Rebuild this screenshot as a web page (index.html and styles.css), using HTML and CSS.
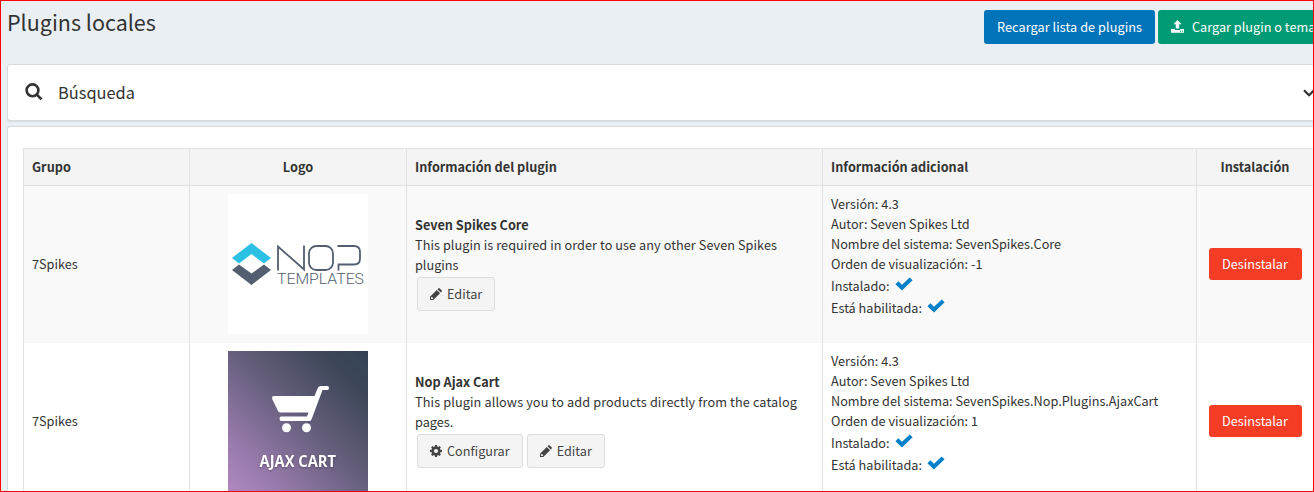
FILE: index.html
```html
<!DOCTYPE html>
<html lang="es">
<head>
<meta charset="utf-8">
<title>Plugins locales</title>
<link rel="stylesheet" href="styles.css">
</head>
<body>
<svg width="0" height="0" class="sprite">
  <symbol id="check" viewBox="0 0 18 14"><path d="M0.4 7.2 3.4 4.2 7 7.7 14.7 0.4 17.6 3.3 7 13.4Z"/></symbol>
  <symbol id="pencil" viewBox="0 0 12 12"><path fill-rule="evenodd" d="M0 12V8.7L6.8 1.9 10.1 5.2 3.3 12ZM1.1 9.5V10.9H2.6L3.3 10.2 1.8 8.7ZM7.5 1.2 8.3.4Q9 -.2 9.7.4L11.6 2.3Q12.2 3 11.6 3.7L10.8 4.5Z"/></symbol>
  <symbol id="gear" viewBox="0 0 12 12"><path fill-rule="evenodd" d="M5 0H7L7.3 1.6 8.2 2 9.6 1.1 10.9 2.4 10 3.8 10.4 4.7 12 5V7L10.4 7.3 10 8.2 10.9 9.6 9.6 10.9 8.2 10 7.3 10.4 7 12H5L4.7 10.4 3.8 10 2.4 10.9 1.1 9.6 2 8.2 1.6 7.3 0 7V5L1.6 4.7 2 3.8 1.1 2.4 2.4 1.1 3.8 2 4.7 1.6ZM6 3.9A2.1 2.1 0 1 0 6 8.1 2.1 2.1 0 1 0 6 3.9Z"/></symbol>
</svg>
<div class="page">
  <header class="top">
    <h1 class="title">Plugins locales</h1>
    <div class="actions">
      <a class="btn btn-blue"><span class="t-reload">Recargar lista de plugins</span></a>
      <a class="btn btn-green"><svg class="upload" width="13" height="13" viewBox="0 0 13 13"><path d="M6.5 0 10.6 4.3H8.2V8.5H4.8V4.3H2.4ZM0 9H4V10H9V9H13V12.7H0Z"/><path d="M9 10.8H10V11.8H9ZM11 10.8H12V11.8H11Z" fill="#009b74"/></svg><span class="t-upload">Cargar plugin o tema</span></a>
    </div>
  </header>
  <section class="panel search">
    <svg class="lens" width="18" height="18" viewBox="0 0 18 18"><circle cx="7.5" cy="7.3" r="5.9"/><path d="M11.7 11.5 16.5 16.3"/></svg>
    <span class="search-label">Búsqueda</span>
    <svg class="chev" width="12" height="8" viewBox="0 0 12 8"><path d="M1 1.3 6 6.2 11 1.3"/></svg>
  </section>
  <section class="panel list">
    <div class="grid">
      <div class="cell head">Grupo</div>
      <div class="cell head mid">Logo</div>
      <div class="cell head">Información del plugin</div>
      <div class="cell head">Información adicional</div>
      <div class="cell head mid">Instalación</div>

      <div class="cell odd">7Spikes</div>
      <div class="cell odd mid">
        <svg width="140" height="140" viewBox="0 0 140 140">
          <rect width="140" height="140" fill="#fff"/>
          <path fill="#2bc0e4" d="M4 64 23.5 49 43 64 36 69.5 23.5 60 11 69.5Z"/>
          <path fill="#535f70" d="M4 76 11 70.5 23.5 79.5 36 70.5 43 76 23.5 91Z"/>
          <g class="nop"><path d="M50 76.5V52.5L76 75.5V51.5"/><rect x="81" y="52" width="24" height="24" rx="7.5"/><path d="M109.5 52H126Q132 52 132 58V64.5Q132 70.5 126 70.5H110.5V76.5"/></g>
          <text class="logo-sub" x="49" y="90" textLength="87" lengthAdjust="spacingAndGlyphs">TEMPLATES</text>
        </svg>
      </div>
      <div class="cell odd info">
        <strong>Seven Spikes Core</strong>
        <span class="desc-core">This plugin is required in order to use any other Seven Spikes</span>
        <span>plugins</span>
        <div class="tools"><a class="btn btn-grey"><svg class="ico" width="12" height="12"><use href="#pencil"/></svg>Editar</a></div>
      </div>
      <div class="cell odd extra">
        <span>Versión: 4.3</span>
        <span>Autor: Seven Spikes Ltd</span>
        <span>Nombre del sistema: SevenSpikes.Core</span>
        <span>Orden de visualización: -1</span>
        <span class="flag">Instalado: <svg class="tick" width="18" height="14"><use href="#check"/></svg></span>
        <span class="flag">Está habilitada: <svg class="tick" width="18" height="14"><use href="#check"/></svg></span>
      </div>
      <div class="cell odd mid"><a class="btn btn-red">Desinstalar</a></div>

      <div class="cell even">7Spikes</div>
      <div class="cell even mid">
        <svg width="140" height="140" viewBox="0 0 140 140">
          <defs><linearGradient id="dusk" x1="0" y1="1" x2="1" y2="0"><stop offset="0" stop-color="#b088c0"/><stop offset=".2" stop-color="#977aab"/><stop offset=".5" stop-color="#68607f"/><stop offset=".82" stop-color="#3e475a"/><stop offset="1" stop-color="#334154"/></linearGradient></defs>
          <rect width="140" height="140" fill="url(#dusk)"/>
          <path fill="#fff" d="M46 45H86.500L90 36.500Q91 35 93 35H99.500Q101 35 101 37T99.500 39H94.500L83.500 68.500Q83 70 81 70H53.500Q51.500 70 51.500 67.700T53.500 65.500H79L80.500 61.500H52.500Q51 61.500 50 60L44.200 48Q43.500 45 46 45Z"/>
          <circle cx="58.500" cy="76.700" r="4.500" fill="#fff"/><circle cx="78.500" cy="76.700" r="4.500" fill="#fff"/>
          <text class="cart-name" x="31.500" y="116" textLength="76.500" lengthAdjust="spacingAndGlyphs">AJAX CART</text>
        </svg>
      </div>
      <div class="cell even info">
        <strong>Nop Ajax Cart</strong>
        <span class="desc-cart">This plugin allows you to add products directly from the catalog</span>
        <span>pages.</span>
        <div class="tools"><a class="btn btn-grey"><svg class="ico" width="12" height="12"><use href="#gear"/></svg>Configurar</a><a class="btn btn-grey"><svg class="ico" width="12" height="12"><use href="#pencil"/></svg>Editar</a></div>
      </div>
      <div class="cell even extra">
        <span>Versión: 4.3</span>
        <span>Autor: Seven Spikes Ltd</span>
        <span>Nombre del sistema: SevenSpikes.Nop.Plugins.AjaxCart</span>
        <span>Orden de visualización: 1</span>
        <span class="flag">Instalado: <svg class="tick" width="18" height="14"><use href="#check"/></svg></span>
        <span class="flag">Está habilitada: <svg class="tick" width="18" height="14"><use href="#check"/></svg></span>
      </div>
      <div class="cell even mid"><a class="btn btn-red">Desinstalar</a></div>
    </div>
  </section>
</div>
</body>
</html>
```
FILE: styles.css
```css
* { box-sizing: border-box; }
body { margin: 0; font: 12.7px/20px "Noto Sans CJK SC", "Noto Sans", sans-serif; color: #333; }
.sprite { display: none; }
.page { height: 492px; overflow: hidden; border: 1px solid #f00; border-bottom-color: #e01010; background: #eaeff4; padding: 0 0 0 6px; }
.top { display: flex; justify-content: space-between; height: 63px; padding-top: 9px; }
.title { margin: 0; font-size: 21.5px; font-weight: 400; line-height: 23px; white-space: nowrap; }
.actions { display: flex; gap: 3px; width: 329px; flex: none; overflow: hidden; }
.btn { display: flex; align-items: center; justify-content: center; flex: none; border-radius: 3px; white-space: nowrap; height: 34px; }
.btn-blue { width: 171px; background: #0073b9; color: #fff; }
.t-reload { letter-spacing: .06px; }
.btn-green { width: 184px; background: #009b74; color: #fff; justify-content: flex-start; padding-left: 13px; }
.upload { fill: #fff; margin: -1px 8px 0 0; }
.btn-grey { background: #f4f4f4; border: 1px solid #ddd; color: #444; padding: 0 12px; }
.btn-red { background: #f53d26; color: #fff; width: 93px; height: 32px; }
.ico { fill: #444; margin-right: 5px; }
.panel { background: #fff; border: 1px solid #d9dcdf; border-right: 0; border-radius: 3px 0 0 3px; box-shadow: 0 1px 1px rgba(0,0,0,.08); }
.search { display: flex; align-items: center; height: 57px; padding-left: 17px; overflow: hidden; }
.lens { fill: none; stroke: #333; stroke-width: 2.6; flex: none; margin-top: -1px; }
.search-label { font-size: 16.4px; margin: -1px 0 0 15px; flex: 1; }
.chev { fill: none; stroke: #333; stroke-width: 2.2; flex: none; margin-right: -2px; }
.list { margin-top: 5px; height: 400px; padding: 21px 0 0 15px; }
.grid { display: grid; grid-template-columns: 166px 217px 416px 374px 117px; grid-template-rows: 37px 157px 157px; }
.cell { display: flex; align-items: center; padding: 0 8px; border-left: 1px solid #e2e2e2; border-top: 1px solid #e2e2e2; white-space: nowrap; }
.head { background: #f4f4f4; font-weight: 700; }
.mid { justify-content: center; }
.odd { background: #f9f9f9; }
.even { border-top-color: #f4f4f4; }
.info { flex-direction: column; align-items: flex-start; justify-content: center; }
.desc-core { letter-spacing: .065px; }
.desc-cart { letter-spacing: .12px; }
.tools { display: flex; gap: 4px; padding: 2px; }
.extra { flex-direction: column; align-items: flex-start; padding-top: 8px; }
.flag { display: flex; align-items: center; height: 22px; gap: 5px; padding-top: 2px; }
.tick { fill: #0480cb; margin-top: -4px; }
.nop { fill: none; stroke: #535f70; stroke-width: 1.8; }
.logo-sub { font: 300 14.5px Roboto, "Liberation Sans", sans-serif; fill: #535f70; }
.cart-name { font: 700 15.500px "Open Sans", sans-serif; fill: #fff; filter: drop-shadow(0 1px 1px rgba(0,0,0,.3)); }
```
